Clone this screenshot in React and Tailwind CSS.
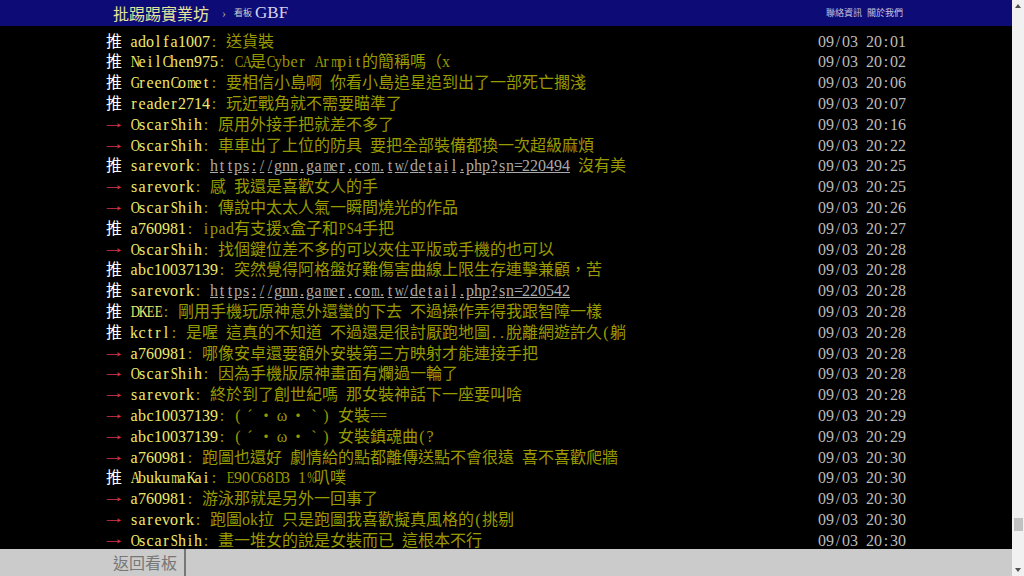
const pushes = [
  ['推', 'adolfa1007', '送貨裝', '20:01'],
  ['推', 'NeilChen975', 'CA是Cyber Armpit的簡稱嗎（x', '20:02'],
  ['推', 'GreenComet', '要相信小島啊 你看小島追星追到出了一部死亡擱淺', '20:06'],
  ['推', 'reader2714', '玩近戰角就不需要瞄準了', '20:07'],
  ['→', 'OscarShih', '原用外接手把就差不多了', '20:16'],
  ['→', 'OscarShih', '車車出了上位的防具 要把全部裝備都換一次超級麻煩', '20:22'],
  ['推', 'sarevork', ' 沒有美', '20:25', 'https://gnn.gamer.com.tw/detail.php?sn=220494'],
  ['→', 'sarevork', '感 我還是喜歡女人的手', '20:25'],
  ['→', 'OscarShih', '傳說中太太人氣一瞬間燒光的作品', '20:26'],
  ['推', 'a760981', 'ipad有支援x盒子和PS4手把', '20:27'],
  ['→', 'OscarShih', '找個鍵位差不多的可以夾住平版或手機的也可以', '20:28'],
  ['推', 'abc10037139', '突然覺得阿格盤好難傷害曲線上限生存連擊兼顧，苦', '20:28'],
  ['推', 'sarevork', '', '20:28', 'https://gnn.gamer.com.tw/detail.php?sn=220542'],
  ['推', 'DKEE', '剛用手機玩原神意外還蠻的下去 不過操作弄得我跟智障一樣', '20:28'],
  ['推', 'kctrl', '是喔 這真的不知道 不過還是很討厭跑地圖..脫離網遊許久(躺', '20:28'],
  ['→', 'a760981', '哪像安卓還要額外安裝第三方映射才能連接手把', '20:28'],
  ['→', 'OscarShih', '因為手機版原神畫面有爛過一輪了', '20:28'],
  ['→', 'sarevork', '終於到了創世紀嗎 那女裝神話下一座要叫啥', '20:28'],
  ['→', 'abc10037139', '(ˊ・ω・ˋ) 女裝==', '20:29'],
  ['→', 'abc10037139', '(ˊ・ω・ˋ) 女裝鎮魂曲(?', '20:29'],
  ['→', 'a760981', '跑圖也還好 劇情給的點都離傳送點不會很遠 喜不喜歡爬牆', '20:30'],
  ['推', 'AbukumaKai', 'E90C68D3 1%叭噗', '20:30'],
  ['→', 'a760981', '游泳那就是另外一回事了', '20:30'],
  ['→', 'sarevork', '跑圖ok拉 只是跑圖我喜歡擬真風格的(挑剔', '20:30'],
  ['→', 'OscarShih', '畫一堆女的說是女裝而已 這根本不行', '20:30'],
];

// big5 terminal grid: half width = 8px, full width = 16px
const isWide = (ch) => ch.charCodeAt(0) >= 0x2e80 || '→ˊˋω・'.includes(ch);

// squeeze the wide latin glyphs so they fit the 8px cell
const squeeze = (ch) => {
  if ('mMW%'.includes(ch)) return 'scale-x-[0.68]';
  if (/[wA-Z]/.test(ch)) return 'scale-x-[0.8]';
  if (ch === '→') return 'scale-x-[1.5] -translate-y-[2px]';
  return '';
};

const Cells = ({ text, className = '' }) =>
  [...text].map((ch, i) => (
    <span
      key={i}
      className={`inline-block text-center ${isWide(ch) ? 'w-[16px]' : 'w-[8px]'} ${squeeze(ch)} ${className}`}
    >
      {ch === ' ' ? '\u00a0' : ch}
    </span>
  ));

const PushRow = ({ tag, user, content, time, link }) => (
  <div className="flex justify-between h-[20.8px] leading-[20.8px] whitespace-nowrap overflow-hidden">
    <div>
      <span className={tag === '推' ? 'text-white' : 'text-[#d8364a]'}>
        <Cells text={tag + ' '} />
      </span>
      <span className="text-[#eeea6c]">
        <Cells text={user} />
      </span>
      <span className="text-[#990]">
        <Cells text=": " />
        {link && <Cells text={link} className="text-[#aaa] underline" />}
        <Cells text={content} />
      </span>
    </div>
    <div className="text-[#bbb]">
      <Cells text={'09/03 ' + time} />
    </div>
  </div>
);

const App = () => {
  return (
    <div className="h-screen flex bg-black overflow-hidden font-['Liberation_Serif','Noto_Sans_CJK_TC',serif] text-[16px]">
      <div className="flex-1 flex flex-col min-w-0">
        {/* topbar */}
        <div className="h-[26px] bg-[#0d0c76] shrink-0">
          <div className="w-[800px] mx-auto h-full flex items-center pl-[7px] pr-[3px]">
            <span className="text-[#e6e49a] text-[16px] font-['Noto_Sans_CJK_TC',sans-serif]">批踢踢實業坊</span>
            <span className="text-[#aaa] text-[12px] ml-[13px]">›</span>
            <span className="text-[#ccc] text-[9px] ml-[8px] font-['Noto_Sans_CJK_TC',sans-serif]">看板</span>
            <span className="text-[#d4d4ee] text-[17px] ml-[3px]">GBF</span>
            <div className="ml-auto flex gap-[5px] text-[9px] text-[#c4c4e2] font-['Noto_Sans_CJK_TC',sans-serif]">
              <span>聯絡資訊</span>
              <span>關於我們</span>
            </div>
          </div>
        </div>

        {/* push list */}
        <div className="flex-1 overflow-hidden pt-[5.6px]">
          <div className="w-[800px] mx-auto">
            {pushes.map(([tag, user, content, time, link], i) => (
              <PushRow key={i} tag={tag} user={user} content={content} time={time} link={link} />
            ))}
          </div>
        </div>

        {/* bottom nav */}
        <div className="h-[27px] bg-[#cbcbcb] shrink-0">
          <div className="w-[800px] mx-auto h-full flex">
            <span className="px-[7px] border-r-2 border-[#777] text-[#777] leading-[27px] font-['Noto_Sans_CJK_TC',sans-serif]">
              返回看板
            </span>
          </div>
        </div>
      </div>

      {/* scrollbar */}
      <div className="w-[12px] bg-[#f1f1f1] flex flex-col items-center shrink-0">
        <div className="h-[12px] flex items-center justify-center">
          <svg width="6" height="4" viewBox="0 0 6 4"><path d="M3 0L6 4H0z" fill="#505050" /></svg>
        </div>
        <div className="flex-1 w-full flex flex-col items-center">
          <div className="flex-1" />
          <div className="w-[9px] h-[13px] bg-[#c1c1c1]" />
          <div className="h-[33px]" />
        </div>
        <div className="h-[12px] flex items-center justify-center">
          <svg width="6" height="4" viewBox="0 0 6 4"><path d="M0 0H6L3 4z" fill="#505050" /></svg>
        </div>
      </div>
    </div>
  );
};

export default App;
